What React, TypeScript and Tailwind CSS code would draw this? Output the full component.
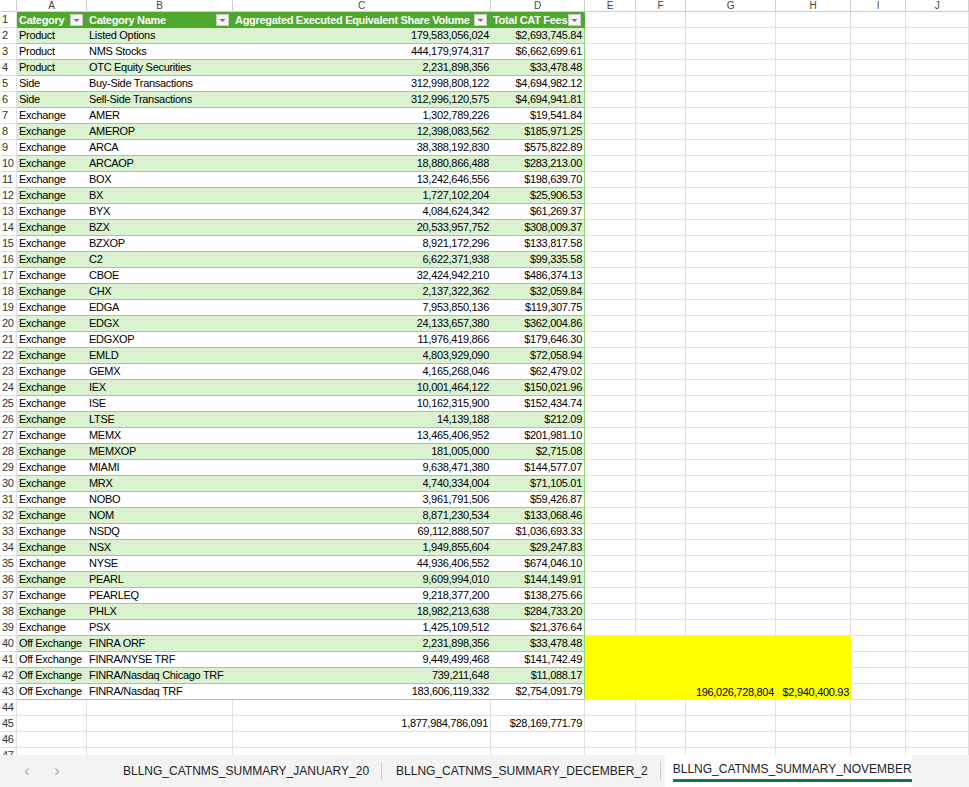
import React from "react";

const data: [string, string, string, string][] = [
  ["Product","Listed Options","179,583,056,024","$2,693,745.84"],
  ["Product","NMS Stocks","444,179,974,317","$6,662,699.61"],
  ["Product","OTC Equity Securities","2,231,898,356","$33,478.48"],
  ["Side","Buy-Side Transactions","312,998,808,122","$4,694,982.12"],
  ["Side","Sell-Side Transactions","312,996,120,575","$4,694,941.81"],
  ["Exchange","AMER","1,302,789,226","$19,541.84"],
  ["Exchange","AMEROP","12,398,083,562","$185,971.25"],
  ["Exchange","ARCA","38,388,192,830","$575,822.89"],
  ["Exchange","ARCAOP","18,880,866,488","$283,213.00"],
  ["Exchange","BOX","13,242,646,556","$198,639.70"],
  ["Exchange","BX","1,727,102,204","$25,906.53"],
  ["Exchange","BYX","4,084,624,342","$61,269.37"],
  ["Exchange","BZX","20,533,957,752","$308,009.37"],
  ["Exchange","BZXOP","8,921,172,296","$133,817.58"],
  ["Exchange","C2","6,622,371,938","$99,335.58"],
  ["Exchange","CBOE","32,424,942,210","$486,374.13"],
  ["Exchange","CHX","2,137,322,362","$32,059.84"],
  ["Exchange","EDGA","7,953,850,136","$119,307.75"],
  ["Exchange","EDGX","24,133,657,380","$362,004.86"],
  ["Exchange","EDGXOP","11,976,419,866","$179,646.30"],
  ["Exchange","EMLD","4,803,929,090","$72,058.94"],
  ["Exchange","GEMX","4,165,268,046","$62,479.02"],
  ["Exchange","IEX","10,001,464,122","$150,021.96"],
  ["Exchange","ISE","10,162,315,900","$152,434.74"],
  ["Exchange","LTSE","14,139,188","$212.09"],
  ["Exchange","MEMX","13,465,406,952","$201,981.10"],
  ["Exchange","MEMXOP","181,005,000","$2,715.08"],
  ["Exchange","MIAMI","9,638,471,380","$144,577.07"],
  ["Exchange","MRX","4,740,334,004","$71,105.01"],
  ["Exchange","NOBO","3,961,791,506","$59,426.87"],
  ["Exchange","NOM","8,871,230,534","$133,068.46"],
  ["Exchange","NSDQ","69,112,888,507","$1,036,693.33"],
  ["Exchange","NSX","1,949,855,604","$29,247.83"],
  ["Exchange","NYSE","44,936,406,552","$674,046.10"],
  ["Exchange","PEARL","9,609,994,010","$144,149.91"],
  ["Exchange","PEARLEQ","9,218,377,200","$138,275.66"],
  ["Exchange","PHLX","18,982,213,638","$284,733.20"],
  ["Exchange","PSX","1,425,109,512","$21,376.64"],
  ["Off Exchange","FINRA ORF","2,231,898,356","$33,478.48"],
  ["Off Exchange","FINRA/NYSE TRF","9,449,499,468","$141,742.49"],
  ["Off Exchange","FINRA/Nasdaq Chicago TRF","739,211,648","$11,088.17"],
  ["Off Exchange","FINRA/Nasdaq TRF","183,606,119,332","$2,754,091.79"],
];

const widths = [17, 70, 146, 258, 94, 51, 50, 90, 75, 55, 63];
const letters = ["", "A", "B", "C", "D", "E", "F", "G", "H", "I", "J"];

function Filter() {
  return (
    <span className="absolute right-[3px] top-[2px] w-[13px] h-[12px] bg-[#f7f7f7] border border-[#c8c8c8] flex items-center justify-center">
      <svg width="7" height="3" viewBox="0 0 7 3"><path d="M0.5 0h6L3.5 3z" fill="#777" /></svg>
    </span>
  );
}

export default function App() {
  const rows: React.ReactNode[] = [];
  for (let r = 1; r <= 47; r++) {
    const inTable = r >= 1 && r <= 43;
    const d = r >= 2 && r <= 43 ? data[r - 2] : null;
    const band = r >= 2 && r <= 43 && r % 2 === 0;
    const cells: React.ReactNode[] = [];
    for (let c = 1; c <= 10; c++) {
      const w = widths[c];
      let bg = "";
      let content: React.ReactNode = null;
      let extra = "border-r border-b border-[#e1e1e1]";
      let align = "justify-start";
      if (inTable && c <= 4) {
        if (r === 1) {
          bg = "bg-[#4ea72e] text-white font-bold";
          extra = "border-r border-[#4ea72e]";
          content = ["Category", "Category Name", "Aggregated Executed Equivalent Share Volume", "Total CAT Fees"][c - 1];
        } else {
          bg = band ? "bg-[#daf2d0]" : "bg-white";
          extra = "border-b border-[#8ed973] " + (c === 4 ? "border-r border-r-[#8ed973]" : "");
          content = d![c - 1];
          if (c >= 3) align = "justify-end";
        }
      }
      if (r >= 40 && r <= 43 && c >= 5 && c <= 8) {
        bg = "bg-[#ffff00]";
        extra = "";
        if (r === 43 && c === 7) { content = "196,026,728,804"; align = "justify-end"; }
        if (r === 43 && c === 8) { content = "$2,940,400.93"; align = "justify-end"; }
      }
      if (r === 45 && c === 3) { content = "1,877,984,786,091"; align = "justify-end"; }
      if (r === 45 && c === 4) { content = "$28,169,771.79"; align = "justify-end"; }
      cells.push(
        <div key={c} style={{ width: w }} className={`relative h-full shrink-0 flex items-center px-[2px] whitespace-nowrap overflow-visible ${align} ${bg} ${extra}`}>
          <span className={r === 1 && c <= 4 ? "pr-[16px]" : ""}>{content}</span>
          {r === 1 && c <= 4 && <Filter />}
        </div>
      );
    }
    rows.push(
      <div key={r} className="flex h-[16px]">
        <div className="w-[17px] shrink-0 h-full flex items-center pl-[2px] text-[#333] bg-white border-r border-b border-[#e1e1e1]">{r}</div>
        {cells}
      </div>
    );
  }
  return (
    <div className="w-[969px] h-[787px] overflow-hidden bg-white relative text-[11px] text-black tracking-[-0.3px]" style={{ fontFamily: '"Liberation Sans", Arial, sans-serif' }}>
      <div className="flex h-[12px] bg-white">
        {widths.map((w, i) => (
          <div key={i} style={{ width: w }} className="shrink-0 h-full flex items-center justify-center text-[10px] text-[#444] border-r border-b border-[#d0d0d0]">
            {letters[i]}
          </div>
        ))}
      </div>
      <div className="h-[743px] overflow-hidden">{rows}</div>
      <div className="absolute left-0 right-0 bottom-0 h-[32px] bg-[#f3f3f3] flex items-center text-[12px] tracking-[0px] text-[#222] whitespace-nowrap">
        <span className="w-[18px] ml-[18px] text-center text-[16px] text-[#aaa]">‹</span>
        <span className="w-[18px] ml-[12px] text-center text-[16px] text-[#aaa]">›</span>
        <span className="pl-[57px] pr-[12px] border-r border-[#ccc]">BLLNG_CATNMS_SUMMARY_JANUARY_20</span>
        <span className="pl-[14px] pr-[12px] border-r border-[#ccc]">BLLNG_CATNMS_SUMMARY_DECEMBER_2</span>
        <div className="ml-[4px] self-stretch bg-white flex flex-col justify-center pl-[8px] whitespace-nowrap">
          <span className="border-b-[3px] border-[#107c41] pb-[1px]">BLLNG_CATNMS_SUMMARY_NOVEMBER</span>
        </div>
      </div>
    </div>
  );
}
